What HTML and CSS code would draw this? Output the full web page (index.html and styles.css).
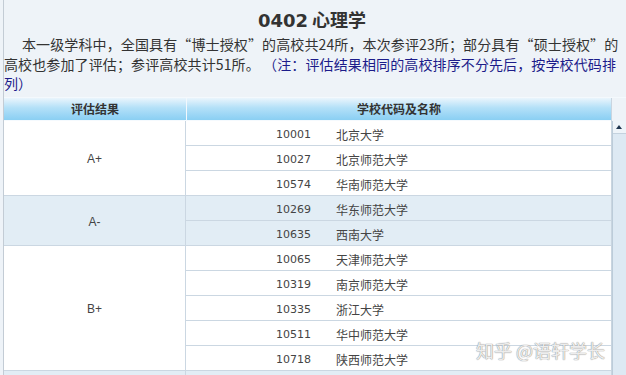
FILE: index.html
```html
<!DOCTYPE html>
<html lang="zh">
<head>
<meta charset="utf-8">
<title>0402 心理学</title>
<link rel="stylesheet" href="styles.css">
</head>
<body>
<div class="page">
  <h1 class="title"><span class="num">0402</span> 心理学</h1>
  <p class="intro">本一级学科中，全国具有“博士授权”的高校共24所，本次参评23所；部分具有“硕士授权”的高校也参加了评估；参评高校共计51所。 <span class="note">（注：评估结果相同的高校排序不分先后，按学校代码排列）</span></p>
  <div class="grid">
    <div class="table">
      <div class="head">
        <div class="hgrade">评估结果</div>
        <div class="hschool">学校代码及名称</div>
      </div>
      <div class="group">
        <div class="grade">A+</div>
        <div class="list">
          <div class="row"><span class="code">10001</span><span class="name">北京大学</span></div>
          <div class="row"><span class="code">10027</span><span class="name">北京师范大学</span></div>
          <div class="row"><span class="code">10574</span><span class="name">华南师范大学</span></div>
        </div>
      </div>
      <div class="group alt">
        <div class="grade">A-</div>
        <div class="list">
          <div class="row"><span class="code">10269</span><span class="name">华东师范大学</span></div>
          <div class="row"><span class="code">10635</span><span class="name">西南大学</span></div>
        </div>
      </div>
      <div class="group">
        <div class="grade">B+</div>
        <div class="list">
          <div class="row"><span class="code">10065</span><span class="name">天津师范大学</span></div>
          <div class="row"><span class="code">10319</span><span class="name">南京师范大学</span></div>
          <div class="row"><span class="code">10335</span><span class="name">浙江大学</span></div>
          <div class="row"><span class="code">10511</span><span class="name">华中师范大学</span></div>
          <div class="row"><span class="code">10718</span><span class="name">陕西师范大学</span></div>
        </div>
      </div>
      <div class="group alt last">
        <div class="grade"></div>
        <div class="list">
          <div class="row"></div>
        </div>
      </div>
    </div>
    <div class="scrollbar"><div class="up"></div></div>
  </div>
  <div class="watermark">知乎 @语轩学长</div>
</div>
</body>
</html>
```
FILE: styles.css
```css
html, body {
  margin: 0;
  padding: 0;
  height: 375px;
  overflow: hidden;
  background: #eef3f8;
}
.page {
  position: relative;
  margin-left: 3px;
  border-left: 1px solid #c3ccd5;
  height: 375px;
  overflow: hidden;
  font-family: "Liberation Sans", "Noto Sans CJK SC", sans-serif;
  color: #333;
}
.title {
  margin: 0;
  padding-top: 8px;
  height: 24px;
  text-align: center;
  font-size: 18px;
  line-height: 22px;
  font-weight: bold;
  font-family: "Noto Sans CJK SC", sans-serif;
  color: #333;
  padding-right: 6px;
}
.title .num {
  font-family: "DejaVu Sans", sans-serif;
}
.intro {
  margin: 3px 0 0 0;
  font-size: 14px;
  line-height: 19.5px;
  text-indent: 18px;
  font-family: "Noto Sans CJK SC", sans-serif;
  color: #333;
  height: 59px;
  letter-spacing: 0.12px;
}
.note {
  color: #1c1c8a;
}
.grid {
  display: flex;
  margin-top: 3px;
  border-top: 1px solid #f4f9fd;
}
.table {
  width: 608px;
  border-right: 1px solid #c9d5e0;
}
.head {
  display: flex;
  height: 22px;
  background: linear-gradient(#eaf5fd, #b3e0f8 45%, #8acff3);
  border-bottom: 1px solid #f5fafe;
  font-size: 12px;
  font-weight: bold;
  line-height: 22px;
  font-family: "Noto Sans CJK SC", sans-serif;
  color: #333;
}
.hgrade {
  width: 182px;
  text-align: center;
  border-right: 1px solid #f2f8fd;
}
.hschool {
  flex: 1;
  text-align: center;
}
.group {
  display: flex;
  background: #fff;
  border-bottom: 1px solid #cbd7e2;
}
.group.alt {
  background: #e2edf5;
}
.grade {
  width: 182px;
  border-right: 1px solid #cbd7e2;
  display: flex;
  align-items: center;
  justify-content: center;
  padding-top: 2px;
  box-sizing: border-box;
  font-size: 12px;
  color: #444;
}
.list {
  flex: 1;
}
.row {
  display: flex;
  height: 24px;
  line-height: 28px;
  font-size: 12px;
  color: #444;
  border-bottom: 1px solid #cbd7e2;
}
.row:last-child {
  border-bottom: none;
}
.code {
  width: 125px;
  text-align: right;
  font-family: "DejaVu Sans", "Noto Sans CJK SC", sans-serif;
  font-size: 11px;
}
.name {
  margin-left: 25px;
  font-family: "Noto Sans CJK SC", sans-serif;
}
.scrollbar {
  width: 13px;
  margin-top: 23px;
  height: 260px;
  background: #dde9f3;
  border-left: 1px solid #bcccd9;
}
.up {
  height: 12px;
  background: #eef4f9;
  border-bottom: 1px solid #c4d2de;
  position: relative;
}
.up::after {
  content: "";
  position: absolute;
  left: 3px;
  top: 4px;
  border-left: 3.5px solid transparent;
  border-right: 3.5px solid transparent;
  border-bottom: 4px solid #1f3550;
}
.watermark {
  position: absolute;
  left: 472px;
  top: 338px;
  font-size: 18px;
  line-height: 24px;
  font-family: "Noto Sans CJK SC", sans-serif;
  color: rgba(255, 255, 255, 0.85);
  text-shadow: 0 0 1px #8a8a8a, 0 0 1px #9a9a9a;
  white-space: nowrap;
}
```
